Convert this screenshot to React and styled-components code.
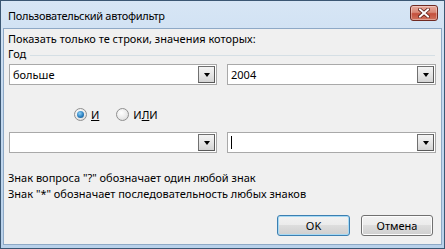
import React from 'react';
import styled, { createGlobalStyle } from 'styled-components';

const GlobalStyle = createGlobalStyle`
  html, body {
    margin: 0;
    padding: 0;
    background: #f0f0f0;
  }
  * {
    box-sizing: border-box;
  }
`;

const Window = styled.div`
  width: 445px;
  height: 249px;
  display: flex;
  flex-direction: column;
  border: 1px solid #3b5773;
  background: linear-gradient(to bottom, #d7e6f5 0%, #c4d9ef 40%, #b9d1ea 100%);
  font-family: 'Noto Sans', 'Open Sans', sans-serif;
  font-size: 11px;
  color: #000;
`;

const TitleBar = styled.div`
  height: 27px;
  display: flex;
  align-items: center;
  justify-content: space-between;
  padding: 1px 6px 0 7px;
`;

const Title = styled.span`
  font-size: 11px;
  letter-spacing: -0.3px;
  color: #000;
`;

const CloseButton = styled.div`
  width: 28px;
  height: 16px;
  margin-top: -4px;
  border: 1px solid #6f2a22;
  border-radius: 3px;
  display: flex;
  align-items: center;
  justify-content: center;
  background: linear-gradient(to bottom, #e9a99b 0%, #d98a78 45%, #c4503c 55%, #d0745f 100%);
  box-shadow: inset 0 0 0 1px rgba(255, 255, 255, 0.35);
`;

const Client = styled.div`
  flex: 1;
  margin: 0 2px 3px 2px;
  border: 1px solid #8ea9c6;
  background: #f0f0f0;
  padding: 2px 5px 0 4px;
  display: flex;
  flex-direction: column;
`;

const Line = styled.div`
  height: 16px;
  line-height: 16px;
  white-space: nowrap;
`;

const GroupHeader = styled.div`
  height: 14px;
  display: flex;
  align-items: center;
  gap: 4px;
  line-height: 14px;

  &::after {
    content: '';
    flex: 1;
    height: 1px;
    margin-top: 2px;
    margin-right: 1px;
    background: #d5dfe5;
  }
`;

const ComboRow = styled.div`
  display: flex;
  gap: 10px;
  padding-left: 1px;
  margin-top: ${(p) => p.$top}px;
`;

const Combo = styled.div`
  width: ${(p) => p.$w}px;
  height: 21px;
  border: 1px solid #a9a9a9;
  background: #fff;
  display: flex;
  align-items: center;
  padding: 0 1px 0 3px;
`;

const ComboText = styled.span`
  flex: 1;
  line-height: 19px;
  white-space: nowrap;
`;

const Caret = styled.span`
  display: block;
  width: 1px;
  height: 13px;
  background: #000;
`;

const DropButton = styled.div`
  width: 17px;
  height: 17px;
  border: 1px solid #707070;
  border-right-color: #5a5a5a;
  border-bottom-color: #5a5a5a;
  background: linear-gradient(to bottom, #f4f4f4 0%, #e6e6e6 50%, #d4d4d4 100%);
  display: flex;
  align-items: center;
  justify-content: center;
`;

const Arrow = styled.span`
  width: 0;
  height: 0;
  border-left: 3.5px solid transparent;
  border-right: 3.5px solid transparent;
  border-top: 4px solid #000;
  margin-top: 1px;
`;

const RadioRow = styled.div`
  display: flex;
  align-items: center;
  height: 16px;
  margin-top: 21px;
  padding-left: 66px;
  gap: 17px;
`;

const RadioItem = styled.label`
  display: flex;
  align-items: center;
  gap: 4px;
`;

const RadioCircle = styled.span`
  width: 13px;
  height: 13px;
  border-radius: 50%;
  border: 1px solid #8f8f8f;
  background: radial-gradient(circle at 40% 35%, #ffffff 0%, #e8e8e8 60%, #d3d3d3 100%);
  display: flex;
  align-items: center;
  justify-content: center;

  &::after {
    content: '';
    display: ${(p) => (p.$checked ? 'block' : 'none')};
    width: 7px;
    height: 7px;
    border-radius: 50%;
    background: radial-gradient(circle at 40% 35%, #8fd1f7 0%, #2a7fc0 55%, #114d80 100%);
  }
`;

const U = styled.span`
  text-decoration: underline;
`;

const Hints = styled.div`
  margin-top: 17px;
`;

const ButtonRow = styled.div`
  display: flex;
  justify-content: flex-end;
  gap: 11px;
  margin-top: 13px;
  padding-right: 3px;
`;

const Button = styled.div`
  width: ${(p) => p.$w}px;
  height: 21px;
  border-radius: 3px;
  border: 1px solid ${(p) => (p.$default ? '#3c7fb1' : '#707070')};
  background: linear-gradient(to bottom, #f2f2f2 0%, #ebebeb 49%, #dddddd 50%, #cfcfcf 100%);
  box-shadow: inset 0 0 0 1px ${(p) => (p.$default ? '#a6d9f4' : '#fcfcfc')};
  display: flex;
  align-items: center;
  justify-content: center;
  line-height: 19px;
`;

export default function App() {
  return (
    <>
      <GlobalStyle />
      <Window>
        <TitleBar>
          <Title>Пользовательский автофильтр</Title>
          <CloseButton>
            <svg width="12" height="10" viewBox="0 0 12 10">
              <path d="M2 1.5 L10 8.5 M10 1.5 L2 8.5" stroke="#5a1c14" strokeWidth="3.6" strokeLinecap="square" />
              <path d="M2 1.5 L10 8.5 M10 1.5 L2 8.5" stroke="#ffffff" strokeWidth="2" strokeLinecap="square" />
            </svg>
          </CloseButton>
        </TitleBar>
        <Client>
          <Line>Показать только те строки, значения которых:</Line>
          <GroupHeader>Год</GroupHeader>
          <ComboRow $top={3}>
            <Combo $w={208}>
              <ComboText>больше</ComboText>
              <DropButton><Arrow /></DropButton>
            </Combo>
            <Combo $w={209}>
              <ComboText>2004</ComboText>
              <DropButton><Arrow /></DropButton>
            </Combo>
          </ComboRow>
          <RadioRow>
            <RadioItem>
              <RadioCircle $checked />
              <U>И</U>
            </RadioItem>
            <RadioItem>
              <RadioCircle />
              <span>И<U>Л</U>И</span>
            </RadioItem>
          </RadioRow>
          <ComboRow $top={10}>
            <Combo $w={208}>
              <ComboText />
              <DropButton><Arrow /></DropButton>
            </Combo>
            <Combo $w={209}>
              <ComboText><Caret /></ComboText>
              <DropButton><Arrow /></DropButton>
            </Combo>
          </ComboRow>
          <Hints>
            <Line>Знак вопроса "?" обозначает один любой знак</Line>
            <Line>Знак "*" обозначает последовательность любых знаков</Line>
          </Hints>
          <ButtonRow>
            <Button $w={73} $default>OK</Button>
            <Button $w={72}>Отмена</Button>
          </ButtonRow>
        </Client>
      </Window>
    </>
  );
}
